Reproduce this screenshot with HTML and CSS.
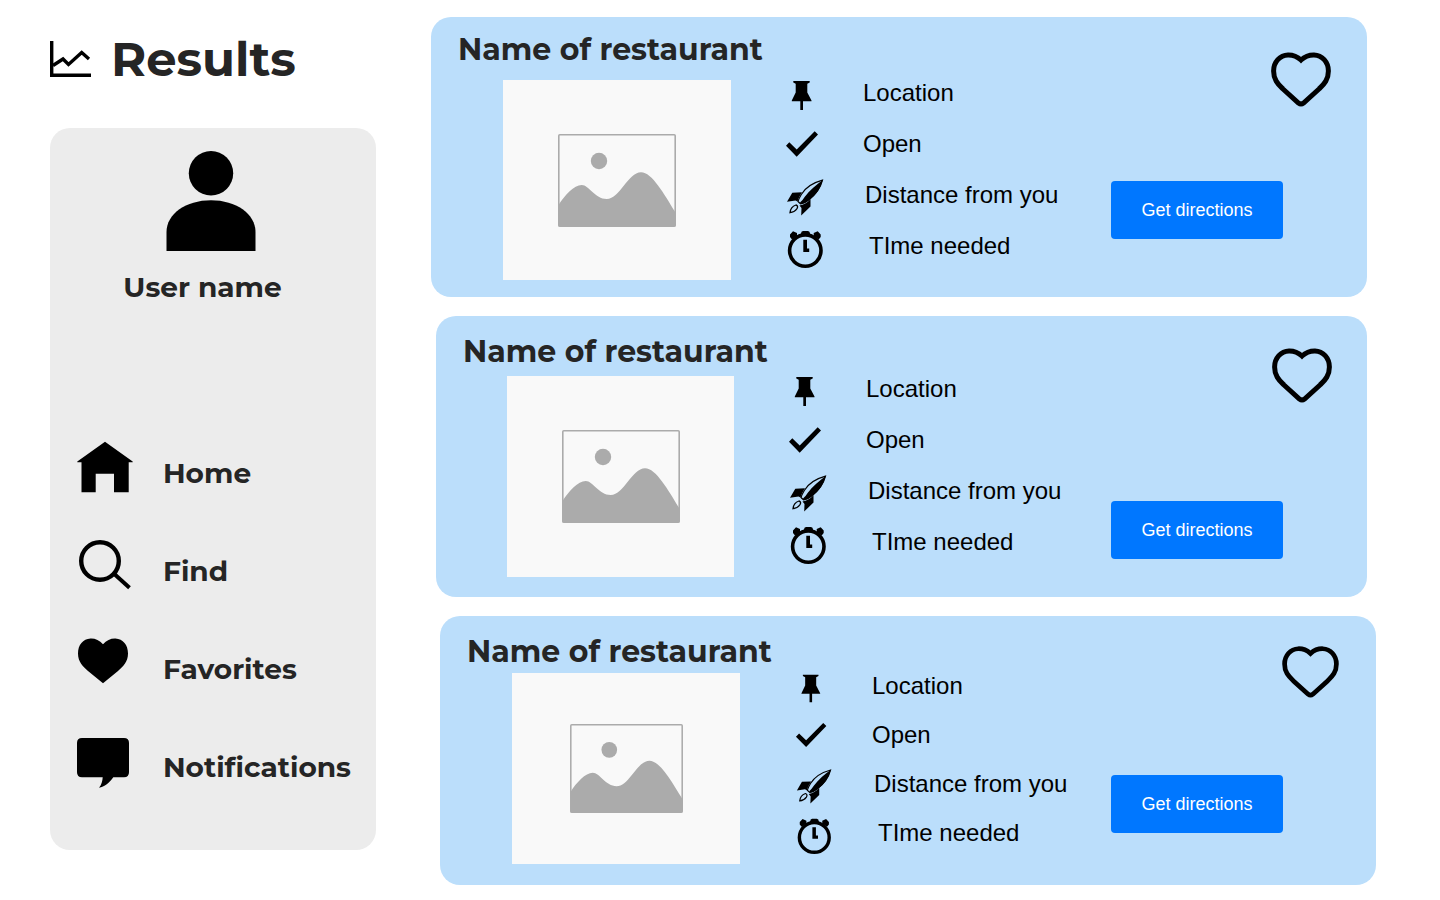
FILE: index.html
```html
<!DOCTYPE html>
<html lang="en">
<head>
<meta charset="utf-8">
<meta name="viewport" content="width=device-width, initial-scale=1">
<title>Results</title>
<link rel="stylesheet" href="styles.css">
</head>
<body>
<svg class="sprite" aria-hidden="true">
  <symbol id="photo" viewBox="0 0 118 93">
    <rect x="0.8" y="0.8" width="116.4" height="91.4" rx="1" fill="none" stroke="#ababab" stroke-width="1.6"/>
    <circle cx="41" cy="27" r="8.2" fill="#ababab"/>
    <path d="M0.5 71C7 61 16 51 23.700 51C31 51 37 65 48.700 65C62 65 70 38.300 83 38.300C94 38.300 106 60 117.500 78.500V92.500H0.500Z" fill="#ababab"/>
  </symbol>
  <symbol id="pin" viewBox="0 0 40 51">
    <path d="M8.300 13H24.700V14.500L22.300 15.800V24.500L26.500 32.500V33.200H18V42H15.300V33.200H6.800V32.500L10.700 24.500V15.800L8.300 14.500Z"/>
  </symbol>
  <symbol id="check" viewBox="0 0 40 51">
    <path d="M1 26.800L4.300 23.300L11.700 30.400L29.700 12.300L33 15.500L11.700 37.700Z"/>
  </symbol>
  <symbol id="rocket" viewBox="0 0 40 51">
    <path d="M37.500 10.200C29 12.500 20.500 17.500 16.300 24.500C14.500 27.500 13.500 29.500 13 31.500L15.500 33.800C18 33.500 21 32 23.500 30C30.500 25 35.500 18 37.500 10.200Z" fill="none" stroke="#000" stroke-width="1.200"/>
    <path d="M37.700 10C31.500 14.500 24.500 20.500 20 26.500L17.500 30L15 32.500L16 34.200C18.500 34 21.500 32.300 24 30.300C31 25 35.700 18 37.700 10Z"/>
    <path d="M2 31.700L7.300 22.700L17 22.300C15 25.500 13.500 28 12.500 31.500L10.500 30.500ZM16.200 45.500L16.500 38L14.500 35.500C18.500 35 22 33 25.500 29V36.500Z"/>
    <path d="M5 42.700C5.300 39.300 7.500 36.200 11 35C12.800 35.500 13 37.200 12 38.700C10 41.500 7.500 42.500 5 42.700Z" fill="none" stroke="#000" stroke-width="1.300"/>
  </symbol>
  <symbol id="clock" viewBox="0 0 40 51">
    <circle cx="20.300" cy="29.600" r="15.700" fill="none" stroke="#000" stroke-width="3.600"/>
    <path d="M16.500 10.800L18 10H23L24.500 10.800L25.500 14.500H15.500ZM5 13.500L8 10.300L12 12V15L7 18.500L5 16ZM35.700 13.500L32.700 10.300L28.700 12V15L33.700 18.500L35.700 16ZM18.300 18.800H22V27.500H24.200V31H18.300Z"/>
  </symbol>
  <symbol id="heart" viewBox="0 0 60 55">
    <path d="M30 8C26 4.300 21.500 2.800 17 2.900C9 3.200 2.600 10 2.600 19C2.600 28 7 32 12 37L27.500 51Q30 53 32.500 51L48 37C53 32 57.400 28 57.400 19C57.400 10 51 3.200 43 2.900C38.500 2.800 34 4.300 30 8Z" fill="none" stroke="#000" stroke-width="5"/>
  </symbol>
</svg>

<div class="page">
  <div class="side">
    <header class="heading">
      <svg class="heading-icon" viewBox="0 0 41 36" aria-hidden="true">
        <path d="M1.700 0V34.300H41" fill="none" stroke="#000" stroke-width="3.400"/>
        <path d="M3 24.500L13 18L18.500 23.500L31.700 11.500L39 18" fill="none" stroke="#000" stroke-width="3.400"/>
      </svg>
      <h1 class="heading-text">Results</h1>
    </header>
    <aside class="panel">
      <div class="profile">
        <svg class="avatar" viewBox="0 0 90 100" aria-hidden="true">
          <circle cx="45" cy="22.200" r="22.200"/>
          <path d="M0.500 100V81C0.500 63 20 49.300 45 49.300S89.500 63 89.500 81V100Z"/>
        </svg>
        <p class="user">User name</p>
      </div>
      <nav class="nav">
        <a class="nav-link" href="#home">
          <svg class="nav-icon" viewBox="0 0 60 80" aria-hidden="true"><path d="M30 9.700L57.700 29.500V30.300H53.700V60.300H39V41.700H20.700V60.300H6.500V30.300H2.300V29.500Z"/></svg>
          <span class="nav-text">Home</span>
        </a>
        <a class="nav-link" href="#find">
          <svg class="nav-icon" viewBox="0 0 60 80" aria-hidden="true"><circle cx="25" cy="31" r="18.800" fill="none" stroke="#000" stroke-width="4.400"/><path d="M39.300 44L54.500 57.700" stroke="#000" stroke-width="4"/></svg>
          <span class="nav-text">Find</span>
        </a>
        <a class="nav-link" href="#favorites">
          <svg class="nav-icon" viewBox="0 0 60 80" aria-hidden="true"><path d="M28 16.300C24.500 12 20 10.300 15.500 10.500C8 10.800 3 17 3 25.500C3 34 8 38.500 13 43L28 55.300L43 43C48 38.500 53 34 53 25.500C53 17 48 10.800 40.500 10.500C36 10.300 31.500 12 28 16.300Z"/></svg>
          <span class="nav-text">Favorites</span>
        </a>
        <a class="nav-link" href="#notifications">
          <svg class="nav-icon" viewBox="0 0 60 80" aria-hidden="true"><path d="M7 12H49Q54 12 54 17V46.300Q54 51.300 49 51.300H38.300C34.500 56.500 29.500 61 24 61.700C26.500 59 27.500 55 27.700 51.300H7Q2 51.300 2 46.300V17Q2 12 7 12Z"/></svg>
          <span class="nav-text">Notifications</span>
        </a>
      </nav>
    </aside>
  </div>

  <main class="results">
    <article class="card card-first">
      <div class="summary">
        <h2 class="name">Name of restaurant</h2>
        <div class="photo"><svg class="photo-icon" role="img" aria-label="Photo"><use href="#photo"/></svg></div>
      </div>
      <ul class="facts">
        <li class="fact"><svg class="fact-icon" aria-hidden="true"><use href="#pin"/></svg><span class="fact-text">Location</span></li>
        <li class="fact"><svg class="fact-icon" aria-hidden="true"><use href="#check"/></svg><span class="fact-text">Open</span></li>
        <li class="fact fact-distance"><svg class="fact-icon" aria-hidden="true"><use href="#rocket"/></svg><span class="fact-text">Distance from you</span></li>
        <li class="fact fact-time"><svg class="fact-icon" aria-hidden="true"><use href="#clock"/></svg><span class="fact-text">TIme needed</span></li>
      </ul>
      <div class="actions">
        <button class="like" type="button" aria-label="Add to favorites"><svg class="like-icon" aria-hidden="true"><use href="#heart"/></svg></button>
        <button class="directions" type="button">Get directions</button>
      </div>
    </article>

    <article class="card card-second">
      <div class="summary">
        <h2 class="name">Name of restaurant</h2>
        <div class="photo"><svg class="photo-icon" role="img" aria-label="Photo"><use href="#photo"/></svg></div>
      </div>
      <ul class="facts">
        <li class="fact"><svg class="fact-icon" aria-hidden="true"><use href="#pin"/></svg><span class="fact-text">Location</span></li>
        <li class="fact"><svg class="fact-icon" aria-hidden="true"><use href="#check"/></svg><span class="fact-text">Open</span></li>
        <li class="fact fact-distance"><svg class="fact-icon" aria-hidden="true"><use href="#rocket"/></svg><span class="fact-text">Distance from you</span></li>
        <li class="fact fact-time"><svg class="fact-icon" aria-hidden="true"><use href="#clock"/></svg><span class="fact-text">TIme needed</span></li>
      </ul>
      <div class="actions">
        <button class="like" type="button" aria-label="Add to favorites"><svg class="like-icon" aria-hidden="true"><use href="#heart"/></svg></button>
        <button class="directions" type="button">Get directions</button>
      </div>
    </article>

    <article class="card card-third">
      <div class="summary">
        <h2 class="name">Name of restaurant</h2>
        <div class="photo"><svg class="photo-icon" role="img" aria-label="Photo"><use href="#photo"/></svg></div>
      </div>
      <ul class="facts">
        <li class="fact"><svg class="fact-icon" aria-hidden="true"><use href="#pin"/></svg><span class="fact-text">Location</span></li>
        <li class="fact"><svg class="fact-icon" aria-hidden="true"><use href="#check"/></svg><span class="fact-text">Open</span></li>
        <li class="fact fact-distance"><svg class="fact-icon" aria-hidden="true"><use href="#rocket"/></svg><span class="fact-text">Distance from you</span></li>
        <li class="fact fact-time"><svg class="fact-icon" aria-hidden="true"><use href="#clock"/></svg><span class="fact-text">TIme needed</span></li>
      </ul>
      <div class="actions">
        <button class="like" type="button" aria-label="Add to favorites"><svg class="like-icon" aria-hidden="true"><use href="#heart"/></svg></button>
        <button class="directions" type="button">Get directions</button>
      </div>
    </article>
  </main>
</div>
</body>
</html>
```
FILE: styles.css
```css
* {
  box-sizing: border-box;
}

body {
  margin: 0;
  background: #fff;
  color: #000;
  font-family: "Liberation Sans", Arial, sans-serif;
}

h1, h2, p, ul {
  margin: 0;
  padding: 0;
}

svg {
  display: block;
  flex: none;
}

.sprite {
  display: none;
}

.page {
  display: grid;
  grid-template-columns: 326px minmax(0, 1fr);
  column-gap: 55px;
  padding: 17px 64px 15px 50px;
}

.heading-text, .user, .nav-link, .name {
  color: #252525;
  font-family: Montserrat, Inter, sans-serif;
  font-variant-ligatures: none;
  font-weight: 700;
}

/* Sidebar */

.heading {
  display: flex;
  align-items: center;
  gap: 20px;
  height: 84px;
}

.heading-icon {
  width: 41px;
  height: 36px;
}

.heading-text {
  font-size: 48px;
  line-height: 60px;
}

.panel {
  margin-top: 27px;
  padding: 23px 20px 35px 25px;
  border-radius: 20px;
  background: #ececec;
}

.profile {
  padding-right: 10px;
}

.avatar {
  width: 90px;
  height: 100px;
  margin: 0 auto;
}

.user {
  margin-top: 18px;
  padding-right: 16px;
  font-size: 28px;
  line-height: 36px;
  text-align: center;
}

.nav {
  display: grid;
  grid-auto-rows: 98px;
  margin-top: 118px;
}

.nav-link {
  display: flex;
  align-items: center;
  gap: 28px;
  font-size: 28px;
  line-height: 36px;
  text-decoration: none;
}

.nav-icon {
  width: 60px;
  height: 80px;
}

.nav-text {
  padding-top: 2px;
}

/* Result cards */

.results {
  display: flex;
  flex-direction: column;
  gap: 19px;
}

.card {
  display: grid;
  grid-template-columns: 354px minmax(0, 1fr) 256px;
  border-radius: 20px;
  background: #bbdefb;
}

.card-first {
  margin-right: 9px;
  padding-bottom: 17px;
}

.card-second {
  grid-template-columns: 352px minmax(0, 1fr) 256px;
  margin-right: 9px;
  margin-left: 5px;
  padding-bottom: 20px;
}

.card-third {
  grid-template-columns: 355px minmax(0, 1fr) 265px;
  margin-left: 9px;
  padding-bottom: 21px;
}

.summary {
  padding-left: 27px;
}

.name {
  padding-top: 13px;
  font-size: 30px;
  line-height: 40px;
  white-space: nowrap;
}

.card-second .name,
.card-third .name {
  padding-top: 16px;
}

.photo {
  display: flex;
  align-items: center;
  justify-content: center;
  width: 228px;
  height: 200px;
  margin: 10px 0 0 45px;
  background: #f9f9f9;
}

.card-second .photo {
  width: 227px;
  height: 201px;
  margin-top: 4px;
  margin-left: 44px;
}

.card-third .photo {
  height: 191px;
  margin-top: 1px;
}

.photo-icon {
  width: 118px;
  height: 93px;
}

.card-third .photo-icon {
  width: 113px;
  height: 89px;
}

.facts {
  padding-top: 51px;
  list-style: none;
}

.card-second .facts {
  padding-top: 48px;
}

.card-third .facts {
  padding-top: 46px;
}

.fact {
  display: flex;
  align-items: center;
  gap: 38px;
  font-size: 24px;
  line-height: 28px;
  white-space: nowrap;
}

.card-third .fact {
  gap: 39px;
}

.fact-distance .fact-text {
  padding-left: 2px;
}

.fact-time .fact-text {
  padding-left: 6px;
}

.fact-text {
  padding-bottom: 2px;
}

.fact-icon {
  width: 40px;
  height: 51px;
}

.card-third .fact-icon {
  width: 38px;
  height: 49px;
}

.actions {
  display: flex;
  flex-direction: column;
  align-items: flex-start;
  padding: 35px 36px 0 0;
}

.card-second .actions {
  padding-top: 32px;
  padding-right: 35px;
}

.card-third .actions {
  padding-top: 30px;
  padding-right: 37px;
}

.like {
  align-self: flex-end;
  padding: 0;
  border: 0;
  background: none;
  cursor: pointer;
}

.like-icon {
  width: 60px;
  height: 55px;
}

.card-third .like-icon {
  width: 57px;
  height: 52px;
}

.directions {
  min-width: 172px;
  height: 58px;
  margin-top: 74px;
  padding: 0 24px;
  border: 0;
  border-radius: 4px;
  background: #07f;
  color: #fff;
  font: 18px/24px "Liberation Sans", Arial, sans-serif;
  cursor: pointer;
}

.card-second .directions {
  margin-top: 98px;
}

.card-third .directions {
  margin-top: 77px;
}
```
